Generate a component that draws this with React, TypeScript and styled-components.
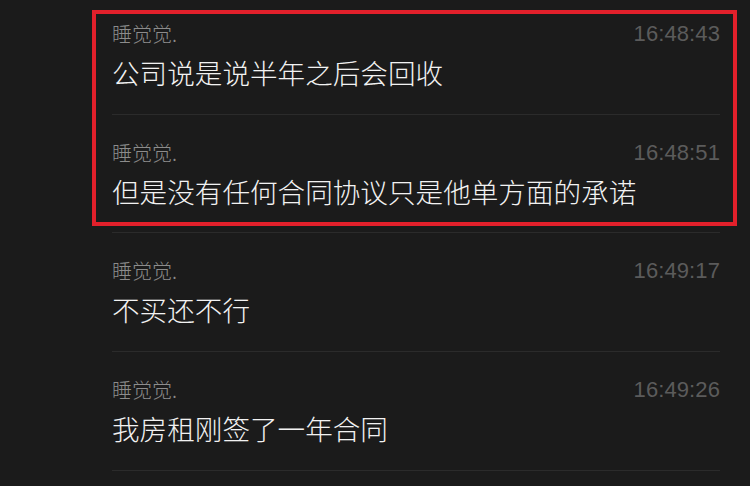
import React from "react";
import styled, { createGlobalStyle } from "styled-components";

const Global = createGlobalStyle`
  html, body {
    margin: 0;
    padding: 0;
    background: #1b1b1b;
  }
  body {
    font-family: "Noto Sans CJK SC", "Liberation Sans", sans-serif;
    -webkit-font-smoothing: antialiased;
  }
`;

const Page = styled.div`
  position: relative;
  width: 750px;
  height: 486px;
  overflow: hidden;
  background: #1b1b1b;
`;

const List = styled.div`
  display: flex;
  flex-direction: column;
  margin: -4px 30px 0 112px;
`;

const Row = styled.div`
  box-sizing: border-box;
  height: 118.7px;
  padding-top: 24px;
  border-bottom: 1px solid #2b2b2b;
  display: flex;
  flex-direction: column;
`;

const Header = styled.div`
  display: flex;
  justify-content: space-between;
  align-items: center;
  height: 28px;
`;

const Name = styled.span`
  font-family: "Noto Sans CJK SC", sans-serif;
  font-size: 20px;
  font-weight: 300;
  line-height: 28px;
  color: #8c8c8c;
`;

const Time = styled.span`
  font-family: "Liberation Sans", "Noto Sans", sans-serif;
  font-size: 22px;
  line-height: 28px;
  color: #5b5b5b;
  letter-spacing: 0.1px;
`;

const Message = styled.div`
  font-family: "Noto Sans CJK SC", sans-serif;
  font-size: 27.6px;
  font-weight: 300;
  line-height: 40px;
  color: #f2f2f2;
  margin-top: 4px;
`;

const Highlight = styled.div`
  position: absolute;
  left: 92px;
  top: 10px;
  width: 645px;
  height: 216px;
  box-sizing: border-box;
  border: 4px solid #e2202b;
  pointer-events: none;
`;

const messages = [
  { name: "睡觉觉.", time: "16:48:43", text: "公司说是说半年之后会回收" },
  { name: "睡觉觉.", time: "16:48:51", text: "但是没有任何合同协议只是他单方面的承诺" },
  { name: "睡觉觉.", time: "16:49:17", text: "不买还不行" },
  { name: "睡觉觉.", time: "16:49:26", text: "我房租刚签了一年合同" },
];

export default function App() {
  return (
    <Page>
      <Global />
      <List>
        {messages.map((m, i) => (
          <Row key={i}>
            <Header>
              <Name>{m.name}</Name>
              <Time>{m.time}</Time>
            </Header>
            <Message>{m.text}</Message>
          </Row>
        ))}
      </List>
      <Highlight />
    </Page>
  );
}
